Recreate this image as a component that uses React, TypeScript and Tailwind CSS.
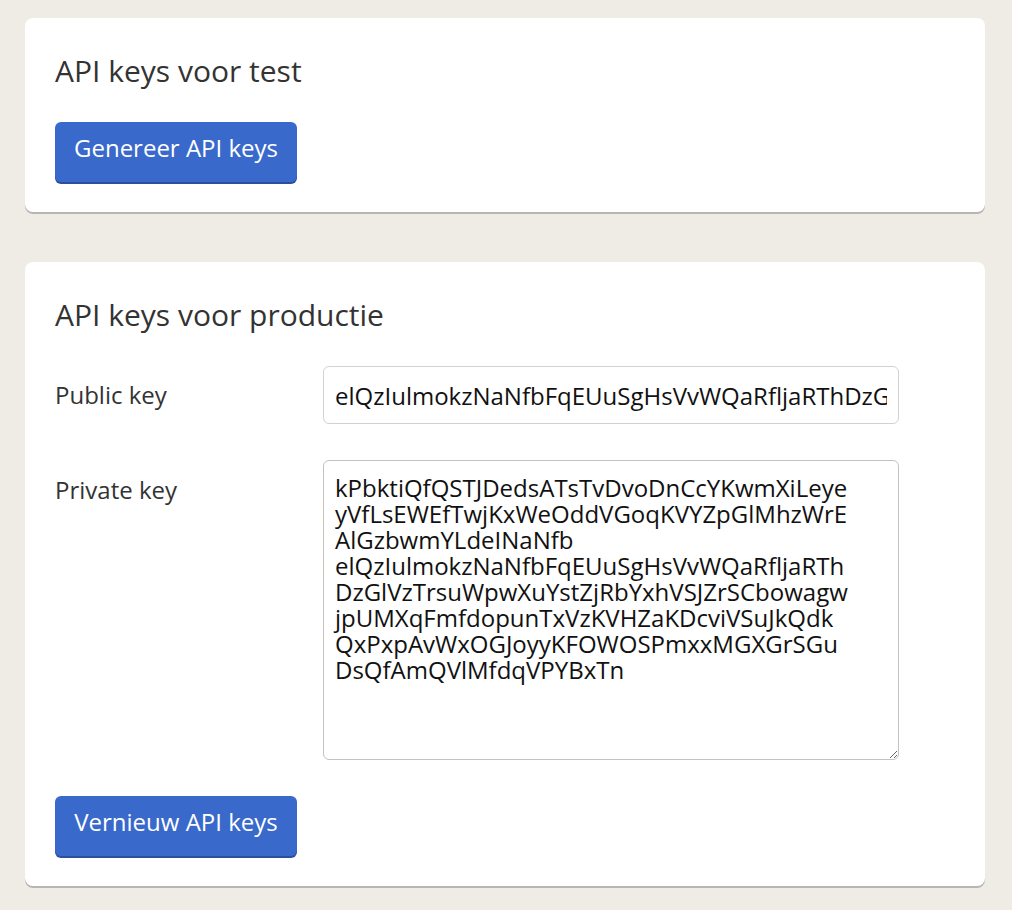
import React from 'react';

const privateKey = [
  'kPbktiQfQSTJDedsATsTvDvoDnCcYKwmXiLeye',
  'yVfLsEWEfTwjKxWeOddVGoqKVYZpGlMhzWrE',
  'AlGzbwmYLdeINaNfb',
  'elQzIulmokzNaNfbFqEUuSgHsVvWQaRfljaRTh',
  'DzGlVzTrsuWpwXuYstZjRbYxhVSJZrSCbowagw',
  'jpUMXqFmfdopunTxVzKVHZaKDcviVSuJkQdk',
  'QxPxpAvWxOGJoyyKFOWOSPmxxMGXGrSGu',
  'DsQfAmQVlMfdqVPYBxTn',
].join('\n');

const publicKey = 'elQzIulmokzNaNfbFqEUuSgHsVvWQaRfljaRThDzGlVzTrsuWpwXuYstZjRbYxhVSJZrSCbowagw';

function Button({ children }: { children: React.ReactNode }) {
  return (
    <button className="h-[60px] w-[242px] rounded-[6px] bg-[#3869cb] pb-[8px] text-[24px] text-white shadow-[0_2px_0_#2b4f9c]">
      {children}
    </button>
  );
}

export default function App() {
  return (
    <div className="min-h-[910px] bg-[#efece6] px-[25px] pt-[18px] pb-6 font-['Open_Sans',sans-serif] text-[#333]">
      <div className="flex w-[960px] flex-col gap-[50px]">
        {/* test keys */}
        <section className="rounded-[8px] bg-white px-[30px] pt-[34px] pb-[30px] shadow-[0_2px_0_#b8b6b2]">
          <h2 className="mb-[32px] text-[30px] leading-[38px]">API keys voor test</h2>
          <Button>Genereer API keys</Button>
        </section>

        {/* production keys */}
        <section className="rounded-[8px] bg-white px-[30px] pt-[34px] pb-[30px] shadow-[0_2px_0_#b8b6b2]">
          <h2 className="mb-[32px] text-[30px] leading-[38px]">API keys voor productie</h2>

          <div className="grid grid-cols-[268px_576px] gap-y-[36px]">
            <label className="flex items-center text-[24px]">Public key</label>
            <input
              readOnly
              value={publicKey}
              className="h-[58px] w-[576px] rounded-[6px] border border-[#d4d2cd] px-[11px] text-[24px] text-[#111] outline-none"
            />

            <label className="pt-[14px] text-[24px] leading-[32px]">Private key</label>
            <textarea
              readOnly
              value={privateKey}
              className="h-[300px] w-[576px] resize-y rounded-[6px] border border-[#c6c3bd] px-[11px] pt-[14px] text-[24px] leading-[26px] text-[#111] outline-none"
            />
          </div>

          <div className="mt-[36px]">
            <Button>Vernieuw API keys</Button>
          </div>
        </section>
      </div>
    </div>
  );
}
